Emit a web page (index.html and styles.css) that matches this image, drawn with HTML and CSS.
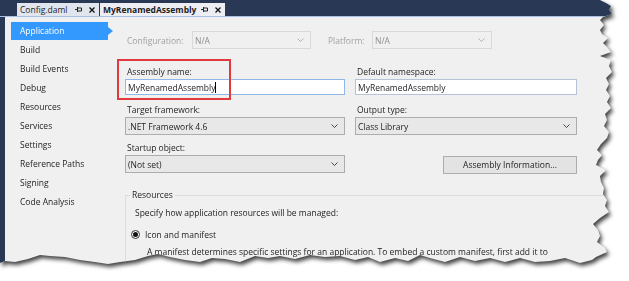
FILE: index.html
```html
<!DOCTYPE html>
<html>
<head>
<meta charset="utf-8">
<link rel="stylesheet" href="styles.css">
</head>
<body>
<div class="frame">
  <div class="window">
    <div class="tabbar">
      <div class="tab tab1">
        <span class="tab-title">Config.daml</span>
        <svg class="pin" width="7" height="7" viewBox="0 0 7 7"><path d="M0 3.5H2.5M2.5 1V6M2.5 2H6.5V5H2.5" fill="none" stroke="#222" stroke-width="1"/></svg>
        <svg class="close" width="6" height="6" viewBox="0 0 6 6"><path d="M0.5 0.5L5.5 5.5M5.5 0.5L0.5 5.5" stroke="#111" stroke-width="1.3"/></svg>
      </div>
      <div class="tab tab2">
        <span class="tab-title bold">MyRenamedAssembly</span>
        <svg class="pin" width="7" height="7" viewBox="0 0 7 7"><path d="M0 3.5H2.5M2.5 1V6M2.5 2H6.5V5H2.5" fill="none" stroke="#222" stroke-width="1"/></svg>
        <svg class="close" width="6" height="6" viewBox="0 0 6 6"><path d="M0.5 0.5L5.5 5.5M5.5 0.5L0.5 5.5" stroke="#111" stroke-width="1.3"/></svg>
      </div>
    </div>
    <div class="body">
      <nav class="nav">
        <div class="nav-item sel"><span class="sel-label">Application</span><span class="arrow"></span></div>
        <div class="nav-item">Build</div>
        <div class="nav-item">Build Events</div>
        <div class="nav-item">Debug</div>
        <div class="nav-item">Resources</div>
        <div class="nav-item">Services</div>
        <div class="nav-item">Settings</div>
        <div class="nav-item">Reference Paths</div>
        <div class="nav-item">Signing</div>
        <div class="nav-item">Code Analysis</div>
      </nav>
      <main class="panel">
        <div class="config-row">
          <span class="dim-label conf-label">Configuration:</span>
          <div class="select disabled conf-select"><span>N/A</span><svg width="7" height="4" viewBox="0 0 7 4"><polyline points="0.5,0.5 3.5,3.5 6.5,0.5" fill="none" stroke="#b0b0b0"/></svg></div>
          <span class="dim-label plat-label">Platform:</span>
          <div class="select disabled plat-select"><span>N/A</span><svg width="7" height="4" viewBox="0 0 7 4"><polyline points="0.5,0.5 3.5,3.5 6.5,0.5" fill="none" stroke="#b0b0b0"/></svg></div>
        </div>
        <div class="grid">
          <div class="field">
            <div class="label">Assembly name:</div>
            <div class="input focused"><span>MyRenamedAssembly</span><span class="caret"></span></div>
          </div>
          <div class="field">
            <div class="label">Default namespace:</div>
            <div class="input"><span>MyRenamedAssembly</span></div>
          </div>
          <div class="field">
            <div class="label">Target framework:</div>
            <div class="select"><span>.NET Framework 4.6</span><svg width="7" height="4" viewBox="0 0 7 4"><polyline points="0.5,0.5 3.5,3.5 6.5,0.5" fill="none" stroke="#444"/></svg></div>
          </div>
          <div class="field">
            <div class="label">Output type:</div>
            <div class="select"><span>Class Library</span><svg width="7" height="4" viewBox="0 0 7 4"><polyline points="0.5,0.5 3.5,3.5 6.5,0.5" fill="none" stroke="#444"/></svg></div>
          </div>
          <div class="field">
            <div class="label">Startup object:</div>
            <div class="select"><span>(Not set)</span><svg width="7" height="4" viewBox="0 0 7 4"><polyline points="0.5,0.5 3.5,3.5 6.5,0.5" fill="none" stroke="#444"/></svg></div>
          </div>
          <div class="field btn-cell">
            <div class="button">Assembly Information...</div>
          </div>
        </div>
        <fieldset class="group">
          <legend>Resources</legend>
          <div class="para">Specify how application resources will be managed:</div>
          <div class="radio-row"><span class="radio"><span class="dot"></span></span><span>Icon and manifest</span></div>
          <div class="para desc">A manifest determines specific settings for an application. To embed a custom manifest, first add it to</div>
        </fieldset>
        <div class="highlight"></div>
      </main>
    </div>
  </div>
</div>
</body>
</html>
```
FILE: styles.css
```css
* { box-sizing: border-box; }
html, body { margin: 0; padding: 0; background: #ffffff; }
body {
  font-family: "Open Sans", "Noto Sans", sans-serif;
  font-size: 8.5px;
  color: #1e1e1e;
}
.frame {
  width: 629px;
  height: 281px;
  filter: drop-shadow(2px 3px 2px rgba(0, 0, 0, 0.75));
}
.window {
  width: 629px;
  height: 281px;
  background: #f0f0f0;
  display: flex;
  flex-direction: column;
  overflow: hidden;
  clip-path: polygon(0 0, 600px 0, 606px 3px, 611px 6px, 609px 10px, 612px 14px, 603px 17px, 600px 20px, 604px 25px, 600px 30px, 602px 34px, 608px 38px, 603px 43px, 607px 47px, 611px 52px, 600px 56px, 611px 60px, 609px 66px, 612px 72px, 606px 78px, 609px 84px, 606px 90px, 610px 96px, 607px 102px, 611px 108px, 605px 114px, 607px 120px, 604px 126px, 609px 132px, 607px 138px, 601px 144px, 597px 150px, 602px 155px, 598px 160px, 596px 165px, 606px 170px, 600px 176px, 601px 182px, 604px 188px, 603px 194px, 607px 200px, 605px 206px, 609px 212px, 600px 218px, 593px 224px, 598px 230px, 600px 236px, 597px 242px, 605px 248px, 607px 252px, 596px 257px, 592px 260px, 580px 263px, 565px 258px, 550px 261px, 535px 262px, 520px 258px, 505px 262px, 490px 258px, 475px 261px, 460px 257px, 445px 262px, 430px 258px, 420px 255px, 408px 261px, 395px 258px, 380px 262px, 368px 257px, 355px 260px, 340px 256px, 325px 257px, 310px 255px, 295px 259px, 280px 256px, 268px 258px, 255px 256px, 240px 262px, 225px 259px, 212px 258px, 200px 262px, 185px 260px, 170px 257px, 158px 254px, 148px 256px, 135px 260px, 120px 262px, 108px 264px, 95px 262px, 80px 260px, 65px 257px, 50px 256px, 40px 255px, 28px 259px, 15px 262px, 5px 261px, 0 263px);
}

/* Tab bar */
.tabbar {
  height: 17px;
  flex: none;
  background: #293955;
  border-bottom: 1px solid #a9c0e4;
  display: flex;
  align-items: flex-end;
  padding-left: 17px;
  gap: 1px;
}
.tab {
  height: 13px;
  display: flex;
  align-items: center;
  padding-left: 3px;
  background: #e1e5ed;
}
.tab1 { width: 82px; }
.tab2 { width: 125px; background: #eceef3; }
.tab-title { flex: 1; white-space: nowrap; line-height: 13px; }
.bold { font-weight: 700; }
.pin { flex: none; }
.close { flex: none; margin-left: 7px; margin-right: 4px; }

/* Body */
.body {
  flex: 1;
  display: flex;
  border-left: 5px solid #293955;
}
.nav {
  width: 119px;
  flex: none;
  padding: 5px 0 0 6px;
}
.nav-item {
  height: 18px;
  line-height: 18px;
  margin-bottom: 1px;
  padding-left: 9px;
  white-space: nowrap;
}
.nav-item.sel {
  display: flex;
  padding-left: 0;
}
.sel-label {
  width: 97px;
  background: #3399ff;
  color: #ffffff;
  padding-left: 9px;
}
.arrow {
  align-self: center;
  width: 0;
  height: 0;
  border-left: 5px solid #3399ff;
  border-top: 4px solid transparent;
  border-bottom: 4px solid transparent;
}

/* Panel */
.panel {
  flex: 1;
  position: relative;
  padding-top: 14px;
}
.config-row {
  display: flex;
  align-items: center;
  height: 18px;
}
.dim-label { color: #a2a2a2; white-space: nowrap; }
.conf-label { margin-left: 3px; width: 65px; }
.conf-select { width: 119px; }
.plat-label { margin-left: 17px; width: 44px; }
.plat-select { width: 120px; }

.select {
  height: 18px;
  display: flex;
  align-items: center;
  justify-content: space-between;
  padding: 0 6px 0 2px;
  background: #e8e8e8;
  border: 1px solid #adadad;
  white-space: nowrap;
}
.select.disabled {
  background: #f0f0f0;
  border-color: #d9d9d9;
  color: #8d8d8d;
}

.grid {
  display: grid;
  grid-template-columns: 220px 222px;
  column-gap: 10px;
  grid-auto-rows: 38px;
  margin-top: 17px;
  margin-left: 1px;
}
.field { display: flex; flex-direction: column; }
.label {
  height: 13px;
  line-height: 12px;
  padding-left: 2px;
  white-space: nowrap;
}
.input {
  height: 16px;
  display: flex;
  align-items: center;
  padding-left: 2px;
  background: #ffffff;
  border: 1px solid #b4c4d6;
  white-space: nowrap;
}
.input.focused { border-color: #8fb8e6; }
.caret {
  display: inline-block;
  width: 1px;
  height: 11px;
  background: #000000;
}
.btn-cell { align-items: flex-end; }
.button {
  margin-top: 14px;
  width: 134px;
  height: 18px;
  line-height: 16px;
  text-align: center;
  background: #e3e3e3;
  border: 1px solid #adadad;
}

.group {
  margin: 9px 0 0 1px;
  width: 500px;
  padding: 0 0 20px 9px;
  border: 1px solid #dcdcdc;
  min-width: 0;
}
.group legend {
  padding: 0 2px;
  margin-left: -5px;
  line-height: 12px;
}
.para {
  line-height: 12px;
  margin-top: 6px;
  white-space: nowrap;
}
.radio-row {
  display: flex;
  align-items: center;
  height: 12px;
  margin-top: 9px;
  margin-left: -4px;
}
.radio {
  width: 9px;
  height: 9px;
  border: 1px solid #333333;
  border-radius: 50%;
  background: #ffffff;
  display: flex;
  align-items: center;
  justify-content: center;
  margin-right: 5px;
}
.dot {
  width: 5px;
  height: 5px;
  border-radius: 50%;
  background: #111111;
}
.desc { padding-left: 12px; }

.highlight {
  position: absolute;
  left: -7px;
  top: 42px;
  width: 114px;
  height: 41px;
  border: 2px solid #e0393e;
}
```
